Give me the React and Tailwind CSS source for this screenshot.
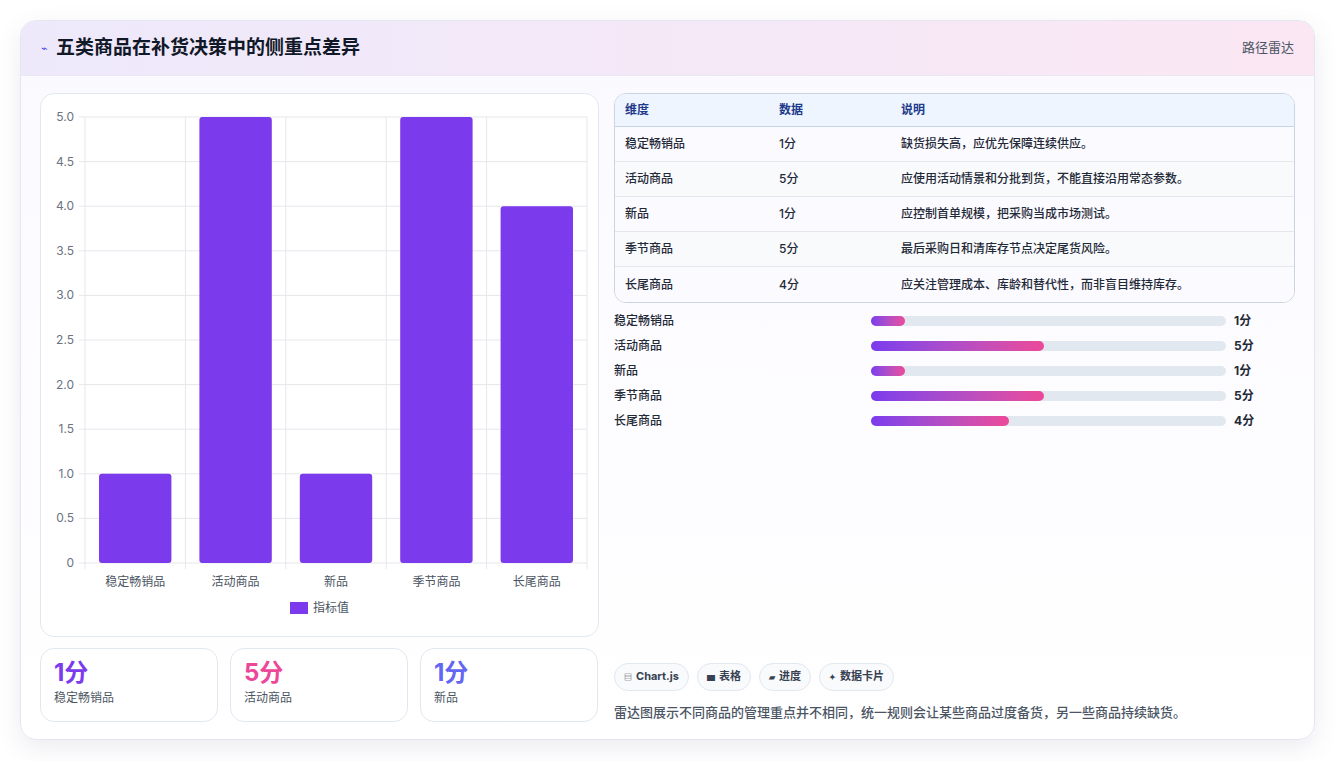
export default function App() {
  const cats = ["稳定畅销品", "活动商品", "新品", "季节商品", "长尾商品"];
  const vals = [1, 5, 1, 5, 4];
  const desc = ["缺货损失高，应优先保障连续供应。", "应使用活动情景和分批到货，不能直接沿用常态参数。", "应控制首单规模，把采购当成市场测试。", "最后采购日和清库存节点决定尾货风险。", "应关注管理成本、库龄和替代性，而非盲目维持库存。"];
  const barW = { 1: 34, 5: 173, 4: 138 };
  const x0 = 44, x1 = 546, yTop = 23, yBot = 469;
  const cw = (x1 - x0) / 5;
  const ticks = [5, 4.5, 4, 3.5, 3, 2.5, 2, 1.5, 1, 0.5, 0];
  const yv = (v) => yBot - (v / 5) * (yBot - yTop);
  return (
    <div className="w-[1336px] h-[761px] bg-white p-[20px]" style={{ fontFamily: "Inter, 'Noto Sans CJK SC', sans-serif" }}>
      <div className="w-[1295px] h-[720px] rounded-[16px] border border-[#e5e7f0] shadow-[0_8px_24px_rgba(100,100,140,0.12)] overflow-hidden flex flex-col bg-gradient-to-b from-[#faf9ff] to-white">
        <div className="h-[55px] shrink-0 flex items-center justify-between px-[20px] bg-gradient-to-r from-[#ede9fb] to-[#fbe7f3] border-b border-[#ebe8f4]">
          <div className="flex items-center gap-[8px]">
            <span className="text-[#4f46e5] text-[11px]">⌁</span>
            <span className="text-[19px] font-bold text-[#111827]">五类商品在补货决策中的侧重点差异</span>
          </div>
          <span className="text-[13px] text-[#4b5563]">路径雷达</span>
        </div>
        <div className="flex-1 flex gap-[15px] px-[19px] pt-[17px] pb-[18px]">
          <div className="w-[559px] flex flex-col gap-[11px]">
            <div className="h-[544px] rounded-[14px] border border-[#e2e8f0] bg-white relative">
              <svg width="557" height="542" className="absolute left-0 top-0" style={{ fontFamily: "Inter, sans-serif" }}>
                {ticks.map((t) => (
                  <g key={t}>
                    <line x1={x0 - 6} x2={x1} y1={yv(t)} y2={yv(t)} stroke="#e5e7eb" />
                    <text x={33} y={yv(t) + 4} textAnchor="end" fontSize="12" fill="#6b7280">{t === 0 ? "0" : t.toFixed(1)}</text>
                  </g>
                ))}
                {[0, 1, 2, 3, 4, 5].map((i) => (
                  <line key={i} x1={x0 + i * cw} x2={x0 + i * cw} y1={yTop} y2={yBot + 6} stroke="#e5e7eb" />
                ))}
                {vals.map((v, i) => (
                  <rect key={i} x={x0 + i * cw + 14} width={cw - 28} y={yv(v)} height={yBot - yv(v)} rx="3" fill="#7c3aed" />
                ))}
                {cats.map((c, i) => (
                  <text key={c} x={x0 + i * cw + cw / 2} y={492} textAnchor="middle" fontSize="12" fill="#4b5563" style={{ fontFamily: "'Noto Sans CJK SC', sans-serif" }}>{c}</text>
                ))}
                <rect x={249} y={508} width={18} height={12} fill="#7c3aed" />
                <text x={272} y={518} fontSize="12" fill="#4b5563" style={{ fontFamily: "'Noto Sans CJK SC', sans-serif" }}>指标值</text>
              </svg>
            </div>
            <div className="flex gap-[12px]">
              {[["1分", "text-[#7c3aed]", "稳定畅销品"], ["5分", "text-[#ec4899]", "活动商品"], ["1分", "text-[#6366f1]", "新品"]].map(([v, c, l], i) => (
                <div key={i} className="w-[178px] h-[74px] rounded-[14px] border border-[#e2e8f0] bg-white px-[13px] pt-[9px]">
                  <div className={`text-[24px] font-bold leading-[30px] ${c}`}>{v}</div>
                  <div className="text-[12px] text-[#4b5563] leading-[16px] mt-[2px]">{l}</div>
                </div>
              ))}
            </div>
          </div>
          <div className="flex-1 flex flex-col">
            <div className="rounded-[12px] border border-[#cbd5e1] overflow-hidden bg-white text-[12px]">
              <div className="flex h-[33px] items-center bg-[#eef5ff] border-b border-[#cbd5e1] font-bold text-[#1e3a8a]">
                <div className="w-[164px] pl-[10px]">维度</div>
                <div className="w-[122px]">数据</div>
                <div className="flex-1">说明</div>
              </div>
              {cats.map((c, i) => (
                <div key={c} className={`flex h-[35px] items-center text-[#1f2937] font-medium ${i < 4 ? "border-b border-[#e5e7eb]" : ""} ${i % 2 ? "bg-[#f8fafc]" : "bg-[#fbfaff]"}`}>
                  <div className="w-[164px] pl-[10px]">{c}</div>
                  <div className="w-[122px]">{vals[i]}分</div>
                  <div className="flex-1">{desc[i]}</div>
                </div>
              ))}
            </div>
            <div className="mt-[10px] flex flex-col gap-[9px]">
              {cats.map((c, i) => (
                <div key={c} className="flex items-center h-[16px] text-[12px] font-medium text-[#1f2937]">
                  <div className="w-[257px]">{c}</div>
                  <div className="w-[355px] h-[10px] rounded-full bg-[#e2e8f0]">
                    <div className="h-[10px] rounded-full bg-gradient-to-r from-[#7c3aed] to-[#ec4899]" style={{ width: barW[vals[i]] }} />
                  </div>
                  <div className="ml-[8px] font-bold">{vals[i]}分</div>
                </div>
              ))}
            </div>
            <div className="mt-auto flex gap-[8px]">
              {[["▤", "Chart.js"], ["▆", "表格"], ["▰", "进度"], ["✦", "数据卡片"]].map(([ic, t]) => (
                <div key={t} className="h-[28px] px-[9px] rounded-full border border-[#e2e8f0] bg-[#f8fafc] flex items-center gap-[4px] text-[11px] font-bold text-[#374151]">
                  <span className="text-[8px]">{ic}</span>{t}
                </div>
              ))}
            </div>
            <div className="mt-[12px] text-[13px] text-[#4b5563] font-medium">雷达图展示不同商品的管理重点并不相同，统一规则会让某些商品过度备货，另一些商品持续缺货。</div>
          </div>
        </div>
      </div>
    </div>
  );
}
